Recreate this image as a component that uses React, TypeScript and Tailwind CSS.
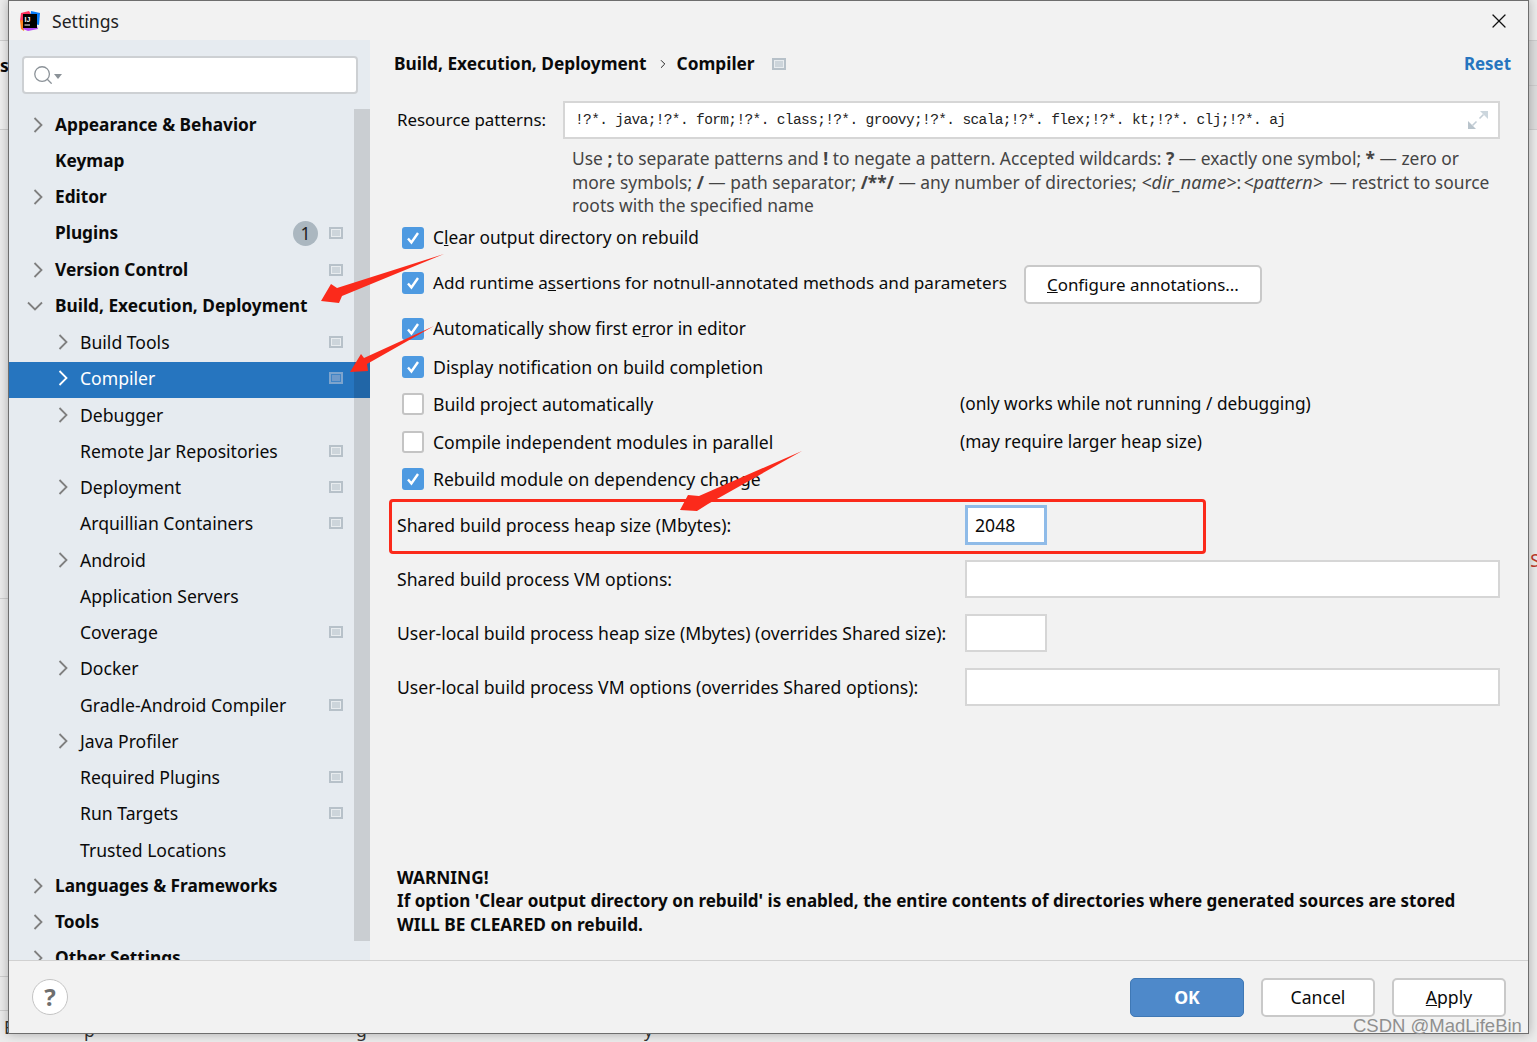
import { ChevronRight, Search, X } from "lucide-react";

type TreeItem = {
  label: string;
  bold?: boolean;
  child?: boolean;
  arrow?: "right" | "down";
  project?: boolean;
  selected?: boolean;
  badge?: string;
};

const tree: TreeItem[] = [
  { label: "Appearance & Behavior", bold: true, arrow: "right" },
  { label: "Keymap", bold: true },
  { label: "Editor", bold: true, arrow: "right" },
  { label: "Plugins", bold: true, project: true, badge: "1" },
  { label: "Version Control", bold: true, arrow: "right", project: true },
  { label: "Build, Execution, Deployment", bold: true, arrow: "down" },
  { label: "Build Tools", child: true, arrow: "right", project: true },
  { label: "Compiler", child: true, arrow: "right", project: true, selected: true },
  { label: "Debugger", child: true, arrow: "right" },
  { label: "Remote Jar Repositories", child: true, project: true },
  { label: "Deployment", child: true, arrow: "right", project: true },
  { label: "Arquillian Containers", child: true, project: true },
  { label: "Android", child: true, arrow: "right" },
  { label: "Application Servers", child: true },
  { label: "Coverage", child: true, project: true },
  { label: "Docker", child: true, arrow: "right" },
  { label: "Gradle-Android Compiler", child: true, project: true },
  { label: "Java Profiler", child: true, arrow: "right" },
  { label: "Required Plugins", child: true, project: true },
  { label: "Run Targets", child: true, project: true },
  { label: "Trusted Locations", child: true },
  { label: "Languages & Frameworks", bold: true, arrow: "right" },
  { label: "Tools", bold: true, arrow: "right" },
  { label: "Other Settings", bold: true, arrow: "right" },
];

function ProjectIcon({ selected }: { selected?: boolean }) {
  return (
    <span className={`block h-[12px] w-[14px] p-[2px] ${selected ? "bg-[#7da4cd]" : "bg-[#b7c1c9]"}`}>
      <span
        className={`block h-full w-full border ${
          selected ? "border-[#3f84c6] bg-[#6f9aca]" : "border-[#e8ecef] bg-[#cdd5db]"
        }`}
      />
    </span>
  );
}

function TreeArrow({ arrow, selected }: { arrow: "right" | "down"; selected?: boolean }) {
  const stroke = selected ? "#ffffff" : "#7f7f7f";
  if (arrow === "down") {
    return (
      <svg width="16" height="10" viewBox="0 0 16 10" fill="none" className="-ml-[3px]">
        <path d="M1 1.5l7 7 7-7" stroke={stroke} strokeWidth="1.8" />
      </svg>
    );
  }
  return (
    <svg width="10" height="16" viewBox="0 0 10 16" fill="none" className="ml-[3px]">
      <path d="M1.5 1l7 7-7 7" stroke={stroke} strokeWidth="1.8" />
    </svg>
  );
}

function TreeRow({ item }: { item: TreeItem }) {
  return (
    <div
      className={`flex h-[36.26px] shrink-0 items-center pb-[3px] pr-[27px] ${item.child ? "pl-[46px]" : "pl-[21px]"} ${
        item.selected ? "bg-[#2675bf] text-white" : "text-[#0a0a0a]"
      }`}
    >
      <span className="flex w-[25px] shrink-0 items-center">
        {item.arrow && <TreeArrow arrow={item.arrow} selected={item.selected} />}
      </span>
      <span className={item.bold ? "flex-1 text-[17.3px] font-bold" : "flex-1"}>{item.label}</span>
      {item.badge && (
        <span className="mr-[11px] flex h-[25px] w-[25px] items-center justify-center rounded-full bg-[#abb7c0] text-[#222]">
          {item.badge}
        </span>
      )}
      {item.project && <ProjectIcon selected={item.selected} />}
    </div>
  );
}

function CheckRow({
  checked,
  children,
  note,
  className,
}: {
  checked?: boolean;
  children: React.ReactNode;
  note?: string;
  className?: string;
}) {
  return (
    <div className={`flex items-center pl-[5px] ${className ?? ""}`}>
      <span
        className={
          checked
            ? "flex h-[22px] w-[22px] shrink-0 items-center justify-center rounded-[3px] bg-[#4e9ae1]"
            : "h-[22px] w-[22px] shrink-0 rounded-[3px] border-2 border-[#c4c4c4] bg-white"
        }
      >
        {checked && (
          <svg width="16" height="16" viewBox="0 0 16 16" fill="none">
            <path d="M3 8.5l3.4 4L13 3" stroke="white" strokeWidth="2.4" />
          </svg>
        )}
      </span>
      <span className="ml-[9px] min-w-[527px] shrink-0 whitespace-nowrap">{children}</span>
      {note && <span className="whitespace-nowrap text-[17.3px]">{note}</span>}
    </div>
  );
}

function PlainButton({ children, className }: { children: React.ReactNode; className?: string }) {
  return (
    <button
      className={`flex h-[39px] w-[114px] items-center justify-center rounded-[5px] border-2 border-[#c9c9c9] bg-white text-[#0a0a0a] ${className ?? ""}`}
    >
      {children}
    </button>
  );
}

function FieldRow({ label, wide, className }: { label: string; wide?: boolean; className?: string }) {
  return (
    <div className={`flex h-[38px] items-center ${className ?? ""}`}>
      <span className="w-[568px] shrink-0 whitespace-nowrap">{label}</span>
      <span className={`h-[38px] border-2 border-[#d6d6d6] bg-white ${wide ? "w-[535px]" : "w-[82px]"}`} />
    </div>
  );
}

function Logo() {
  return (
    <svg width="22" height="22" viewBox="0 0 22 22">
      <path d="M2 3l8-2 3 5-9 9-3-4z" fill="#fe315d" />
      <path d="M12 1l9 2-1 12-9-2z" fill="#087cfa" />
      <path d="M1 10l5 1-1 10-3-2z" fill="#fc801d" />
      <path d="M5 13h12l2 6-10 2-5-2z" fill="#b74af7" />
      <rect x="4" y="4" width="14" height="14" fill="#000" />
      <text x="5.5" y="11.5" fontSize="7" fontWeight="700" fill="#fff" fontFamily="'Liberation Sans', sans-serif">
        IJ
      </text>
      <rect x="5.5" y="14.5" width="5.5" height="1" fill="#fff" />
    </svg>
  );
}

function ExpandIcon() {
  return (
    <svg width="20" height="20" viewBox="0 0 20 20" fill="none">
      <path d="M20 1h-8l8 8z" fill="#ccd6dd" />
      <path d="M0 19h8l-8-8z" fill="#b9c4cc" />
      <path d="M15.5 4.5l-4 4M8.5 11.5l-4 4" stroke="#c3ced6" strokeWidth="1.6" />
    </svg>
  );
}

export default function App() {
  return (
    <div className="relative h-[1042px] w-[1537px] overflow-hidden bg-[#ececec] font-['Noto_Sans',sans-serif] text-[17.6px] leading-[24px] text-[#0a0a0a]">
      {/* bits of the window behind the dialog */}
      <div className="absolute left-0 top-[40px] h-[90px] w-[9px] border-y border-[#cfcfcf] bg-[#f0f0f0]" />
      <span className="absolute left-0 top-[53px] font-bold">s</span>
      <div className="absolute right-0 top-[40px] h-[46px] w-[9px] border-y border-[#cfcfcf] bg-[#dedede]" />
      <div className="absolute right-0 top-[86px] h-[44px] w-[9px] border-b border-[#cfcfcf] bg-[#dedede]" />
      <div className="absolute left-0 top-[598px] h-px w-[9px] bg-[#cfcfcf]" />
      <div className="absolute left-0 top-[976px] h-px w-[9px] bg-[#cfcfcf]" />
      <div className="absolute left-0 top-[1010px] h-px w-[9px] bg-[#cfcfcf]" />
      <span className="absolute right-[-3px] top-[548px] text-[#c0392b]">S</span>
      <span className="absolute left-[4px] top-[1015px] text-[#333]">E</span>
      <span className="absolute left-[84px] top-[1018px] text-[#333]">p</span>
      <span className="absolute left-[356px] top-[1018px] text-[#333]">g</span>
      <span className="absolute left-[644px] top-[1018px] text-[#333]">y</span>

      <div className="absolute left-[8px] top-0 flex h-[1034px] w-[1521px] flex-col border border-[#6e6e6e] bg-[#f2f2f2] shadow-[0_0_10px_rgba(0,0,0,0.28)]">
        <div className="flex h-[39px] shrink-0 items-center justify-between pl-[10px] pr-[17px]">
          <div className="flex items-center gap-[11px]">
            <Logo />
            <span className="text-[#222]">Settings</span>
          </div>
          <X size={24} strokeWidth={1.2} className="text-[#111]" />
        </div>

        <div className="flex min-h-0 flex-1">
          <aside className="relative flex w-[361px] shrink-0 flex-col overflow-hidden bg-[#e6ebf0]">
            <div className="ml-[13px] mr-[12px] mt-[16px] flex h-[38px] shrink-0 items-center rounded-[4px] border-2 border-[#cdd0d3] bg-white pl-[8px]">
              <Search size={22} strokeWidth={1.4} className="text-[#8b9298]" />
              <span className="mt-[2px] h-0 w-0 border-x-[4px] border-t-[5px] border-x-transparent border-t-[#8b9298]" />
            </div>
            <div className="mt-[14px] flex flex-col">
              {tree.map((item) => (
                <TreeRow key={item.label} item={item} />
              ))}
            </div>
            <div className="absolute right-0 top-[69px] h-[832px] w-[16px] bg-black/12" />
          </aside>

          <main className="flex min-w-0 flex-1 flex-col pb-[24px] pl-[27px] pr-[28px]">
            <div className="-ml-[3px] mt-[12px] flex h-[24px] items-center text-[17.3px] font-bold">
              <span>Build, Execution, Deployment</span>
              <ChevronRight size={14} strokeWidth={1.5} className="ml-[9px] mr-[7px]" />
              <span>Compiler</span>
              <span className="ml-[17px]">
                <ProjectIcon />
              </span>
              <span className="ml-auto -mr-[11px] text-[16.9px] text-[#2675bf]">Reset</span>
            </div>

            <div className="mt-[25px] flex h-[38px] items-center">
              <span className="w-[166px] shrink-0 text-[16.9px]">Resource patterns:</span>
              <div className="flex h-[38px] flex-1 items-center justify-between border-2 border-[#d6d6d6] bg-white pl-[10px] pr-[10px] font-['Liberation_Mono',monospace] text-[14.5px] tracking-[-0.63px] text-[#222]">
                <span>!?*. java;!?*. form;!?*. class;!?*. groovy;!?*. scala;!?*. flex;!?*. kt;!?*. clj;!?*. aj</span>
                <ExpandIcon />
              </div>
            </div>

            <div className="ml-[175px] mt-[8px] whitespace-nowrap text-[17.4px] leading-[23.5px] text-[#444]">
              <div>
                Use <b>;</b> to separate patterns and <b>!</b> to negate a pattern. Accepted wildcards: <b>?</b> — exactly
                one symbol; <b>*</b> — zero or
              </div>
              <div>
                more symbols; <b>/</b> — path separator; <b>/**/</b> — any number of directories;{" "}
                <i className="text-[18px]">&lt;dir_name&gt;</i>:<i className="ml-[2px] text-[18px]">&lt;pattern&gt;</i>{" "}
                <span className="ml-[2px]">— restrict to source</span>
              </div>
              <div>roots with the specified name</div>
            </div>

            <CheckRow checked className="mt-[8px] h-[24px] text-[17.3px]">
              C<u>l</u>ear output directory on rebuild
            </CheckRow>
            <div className="mt-[14px] flex h-[38px] items-center">
              <CheckRow checked className="h-[38px] text-[17.1px]">
                Add runtime a<u>s</u>sertions for notnull-annotated methods and parameters
              </CheckRow>
              <PlainButton className="ml-[17px] mt-[4px] w-[238px] shrink-0 text-[16.9px]">
                <span>
                  <u>C</u>onfigure annotations...
                </span>
              </PlainButton>
            </div>
            <CheckRow checked className="mt-[15px] h-[24px] text-[17.3px]">
              Automatically show first e<u>r</u>ror in editor
            </CheckRow>
            <CheckRow checked className="mt-[14px] h-[24px] text-[17.7px]">
              Display notification on build completion
            </CheckRow>
            <CheckRow className="mt-[13px] h-[24px]" note="(only works while not running / debugging)">
              Build project automatically
            </CheckRow>
            <CheckRow className="mt-[14px] h-[24px]" note="(may require larger heap size)">
              Compile independent modules in parallel
            </CheckRow>
            <CheckRow checked className="mt-[13px] h-[24px]">
              Rebuild module on dependency change
            </CheckRow>

            <div className="mt-[14px] flex h-[40px] items-center">
              <span className="w-[568px] shrink-0 whitespace-nowrap">Shared build process heap size (Mbytes):</span>
              <span className="flex h-[40px] w-[82px] items-center border-[3px] border-[#8fbbe8] bg-white pl-[7px]">
                2048
              </span>
            </div>
            <FieldRow label="Shared build process VM options:" wide className="mt-[15px]" />
            <FieldRow label="User-local build process heap size (Mbytes) (overrides Shared size):" className="mt-[16px]" />
            <FieldRow label="User-local build process VM options (overrides Shared options):" wide className="mt-[16px]" />

            <div className="mt-auto whitespace-nowrap text-[17.3px] font-bold leading-[23.5px]">
              <div>WARNING!</div>
              <div className="text-[17.05px]">
                If option 'Clear output directory on rebuild' is enabled, the entire contents of directories where
                generated sources are stored
              </div>
              <div>WILL BE CLEARED on rebuild.</div>
            </div>
          </main>
        </div>

        <footer className="flex h-[73px] shrink-0 items-center justify-between border-t border-[#d1d1d1] pl-[23px] pr-[22px]">
          <span className="flex h-[36px] w-[36px] items-center justify-center rounded-full border border-[#c4c4c4] bg-white text-[24px] font-bold text-[#6e6e6e]">
            ?
          </span>
          <div className="flex gap-[17px]">
            <button className="flex h-[39px] w-[114px] items-center justify-center rounded-[5px] border border-[#3f78b5] bg-[#4e89ca] font-bold text-white">
              OK
            </button>
            <PlainButton>Cancel</PlainButton>
            <PlainButton>
              <span>
                <u>A</u>pply
              </span>
            </PlainButton>
          </div>
        </footer>
      </div>

      {/* red annotations drawn over the screenshot */}
      <svg className="pointer-events-none absolute inset-0" width="1537" height="1042" viewBox="0 0 1537 1042">
        <polygon points="444,254 337,288 331,284 321,301 339,303 342,296" fill="#fb2a1b" />
        <polygon points="434,326 364,358 361,354 350,372 368,371 367,364" fill="#fb2a1b" />
        <polygon points="802,451 699,496 688,495 680,510 697,511 708,504" fill="#fb2a1b" />
      </svg>
      <div className="pointer-events-none absolute left-[389px] top-[499px] h-[55px] w-[817px] rounded-[4px] border-[3px] border-[#fb2a1b]" />
      <span className="absolute left-[1353px] top-[1014px] font-['Liberation_Sans',sans-serif] text-[18.5px] text-[#8f8f8f]">
        CSDN @MadLifeBin
      </span>
    </div>
  );
}
